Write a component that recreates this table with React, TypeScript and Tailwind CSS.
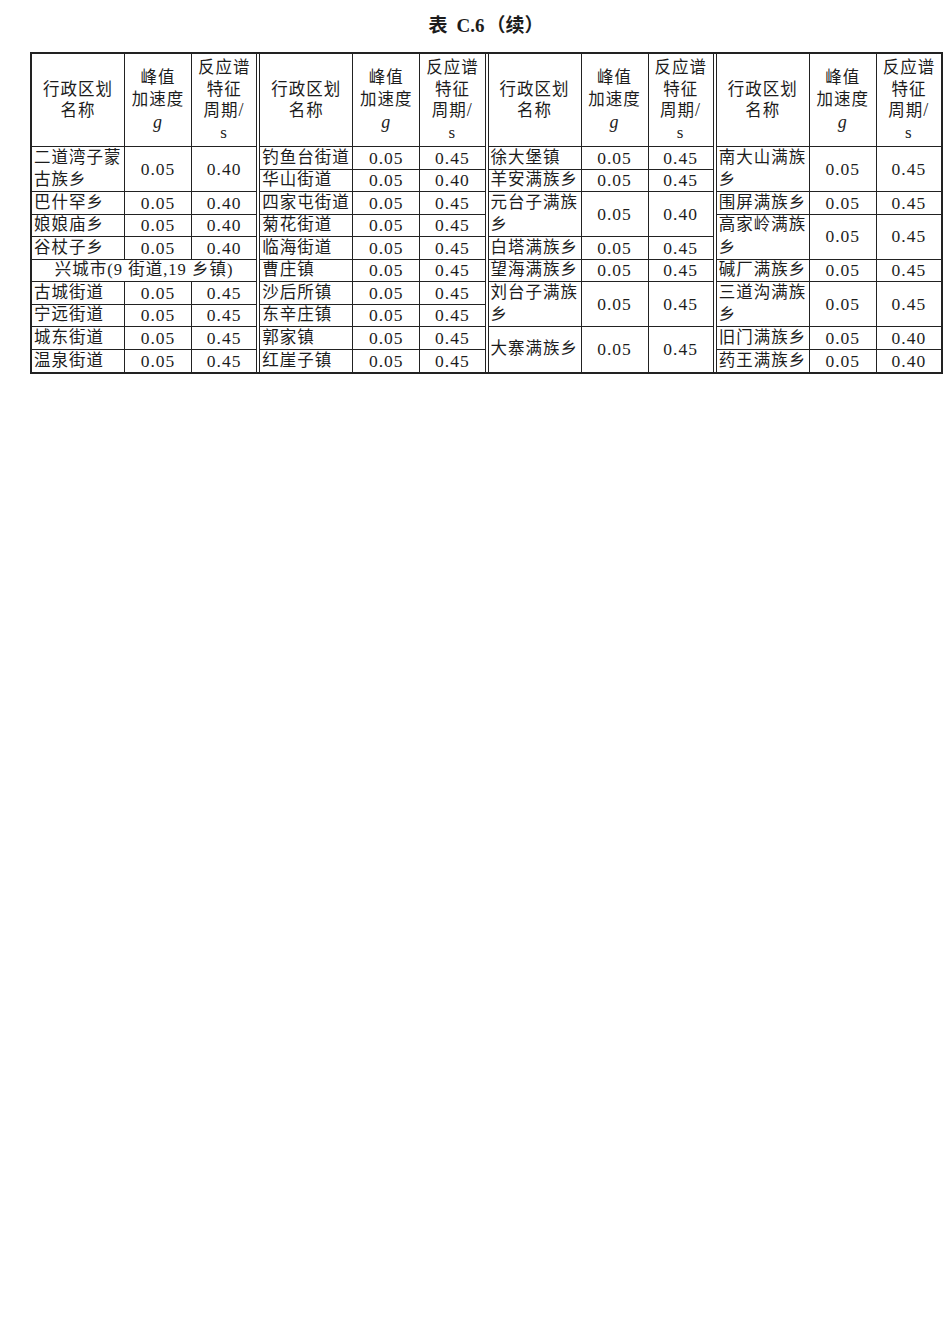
import React from "react";

// 表 C.6（续）— 四栏并排，每栏：名称 / 峰值加速度 / 特征周期
type Row = { name: string; pga?: string; tg?: string; span?: number; full?: boolean };

const blocks: Row[][] = [
  [
    { name: "二道湾子蒙古族乡", pga: "0.05", tg: "0.40", span: 2 },
    { name: "巴什罕乡", pga: "0.05", tg: "0.40" },
    { name: "娘娘庙乡", pga: "0.05", tg: "0.40" },
    { name: "谷杖子乡", pga: "0.05", tg: "0.40" },
    { name: "兴城市(9 街道,19 乡镇)", full: true },
    { name: "古城街道", pga: "0.05", tg: "0.45" },
    { name: "宁远街道", pga: "0.05", tg: "0.45" },
    { name: "城东街道", pga: "0.05", tg: "0.45" },
    { name: "温泉街道", pga: "0.05", tg: "0.45" },
  ],
  [
    { name: "钓鱼台街道", pga: "0.05", tg: "0.45" },
    { name: "华山街道", pga: "0.05", tg: "0.40" },
    { name: "四家屯街道", pga: "0.05", tg: "0.45" },
    { name: "菊花街道", pga: "0.05", tg: "0.45" },
    { name: "临海街道", pga: "0.05", tg: "0.45" },
    { name: "曹庄镇", pga: "0.05", tg: "0.45" },
    { name: "沙后所镇", pga: "0.05", tg: "0.45" },
    { name: "东辛庄镇", pga: "0.05", tg: "0.45" },
    { name: "郭家镇", pga: "0.05", tg: "0.45" },
    { name: "红崖子镇", pga: "0.05", tg: "0.45" },
  ],
  [
    { name: "徐大堡镇", pga: "0.05", tg: "0.45" },
    { name: "羊安满族乡", pga: "0.05", tg: "0.45" },
    { name: "元台子满族乡", pga: "0.05", tg: "0.40", span: 2 },
    { name: "白塔满族乡", pga: "0.05", tg: "0.45" },
    { name: "望海满族乡", pga: "0.05", tg: "0.45" },
    { name: "刘台子满族乡", pga: "0.05", tg: "0.45", span: 2 },
    { name: "大寨满族乡", pga: "0.05", tg: "0.45", span: 2 },
  ],
  [
    { name: "南大山满族乡", pga: "0.05", tg: "0.45", span: 2 },
    { name: "围屏满族乡", pga: "0.05", tg: "0.45" },
    { name: "高家岭满族乡", pga: "0.05", tg: "0.45", span: 2 },
    { name: "碱厂满族乡", pga: "0.05", tg: "0.45" },
    { name: "三道沟满族乡", pga: "0.05", tg: "0.45", span: 2 },
    { name: "旧门满族乡", pga: "0.05", tg: "0.40" },
    { name: "药王满族乡", pga: "0.05", tg: "0.40" },
  ],
];

const spanCls: Record<number, string> = { 1: "row-span-1", 2: "row-span-2" };

function Block({ rows, idx }: { rows: Row[]; idx: number }) {
  let used = 0;
  const edge =
    idx === 0
      ? "border-r border-[#222]"
      : idx === 3
        ? "ml-[2px] border-l border-[#222]"
        : "ml-[2px] border-x border-[#222]";
  return (
    <div className={"grid flex-1 grid-cols-[93px_67px_1fr] grid-rows-[93px_repeat(10,22.5px)] " + edge}>
      {/* 表头 */}
      <div className="flex items-center justify-center border-b border-r border-[#222] text-center leading-[21.5px] tracking-[1px]">
        <div>
          行政区划
          <br />
          名称
        </div>
      </div>
      <div className="flex items-center justify-center border-b border-r border-[#222] text-center leading-[22px] tracking-[1px]">
        <div>
          峰值
          <br />
          加速度
          <br />
          <i className="text-[18px]">g</i>
        </div>
      </div>
      <div className="flex items-center justify-center border-b border-[#222] text-center leading-[21.5px] tracking-[1px]">
        <div>
          反应谱
          <br />
          特征
          <br />
          周期<span className="text-[18px]">/</span>
          <br />
          <span className="text-[17px]">s</span>
        </div>
      </div>

      {rows.map((r, i) => {
        const span = r.span ?? 1;
        used += span;
        const last = used === 10;
        const bb = last ? "" : " border-b";
        if (r.full) {
          return (
            <div
              key={i}
              className={"col-span-3 flex items-center justify-center border-[#222] leading-[22.5px] tracking-[1px]" + bb}
            >
              {r.name}
            </div>
          );
        }
        return (
          <React.Fragment key={i}>
            <div
              className={
                spanCls[span] +
                " flex items-center border-r border-[#222] pl-[2px] leading-[22.5px] tracking-[1px]" +
                bb
              }
            >
              <span>{r.name}</span>
            </div>
            <div
              className={
                spanCls[span] +
                " flex items-center justify-center border-r border-[#222] text-[17.5px] tracking-[1px]" +
                bb
              }
            >
              {r.pga}
            </div>
            <div
              className={
                spanCls[span] + " flex items-center justify-center border-[#222] text-[17.5px] tracking-[1px]" + bb
              }
            >
              {r.tg}
            </div>
          </React.Fragment>
        );
      })}
    </div>
  );
}

export default function App() {
  return (
    <div
      className="min-h-[1320px] w-[950px] bg-white text-[16.5px] text-[#1c1c1c]"
      style={{ fontFamily: '"Liberation Serif", "Noto Sans CJK SC", serif' }}
    >
      <div className="flex h-[52px] items-center justify-center pl-[22px] text-[19px] font-semibold">
        <span>表</span>
        <span className="ml-[9px]">C.6</span>
        <span className="ml-[2px]">（续）</span>
      </div>
      <div className="ml-[30px] flex w-[913px] border-2 border-[#222]">
        {blocks.map((b, i) => (
          <Block key={i} rows={b} idx={i} />
        ))}
      </div>
    </div>
  );
}
